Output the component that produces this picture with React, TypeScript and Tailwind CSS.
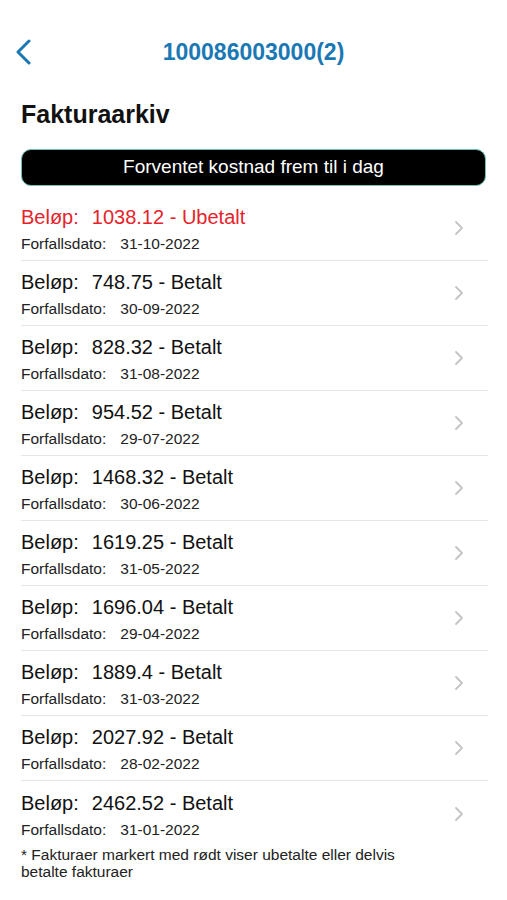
import React from "react";

const rows = [
  { amount: "1038.12", status: "Ubetalt", date: "31-10-2022", red: true },
  { amount: "748.75", status: "Betalt", date: "30-09-2022" },
  { amount: "828.32", status: "Betalt", date: "31-08-2022" },
  { amount: "954.52", status: "Betalt", date: "29-07-2022" },
  { amount: "1468.32", status: "Betalt", date: "30-06-2022" },
  { amount: "1619.25", status: "Betalt", date: "31-05-2022" },
  { amount: "1696.04", status: "Betalt", date: "29-04-2022" },
  { amount: "1889.4", status: "Betalt", date: "31-03-2022" },
  { amount: "2027.92", status: "Betalt", date: "28-02-2022" },
  { amount: "2462.52", status: "Betalt", date: "31-01-2022" },
];

export default function App() {
  return (
    <div
      className="w-[507px] min-h-[900px] bg-white text-[#111]"
      style={{ fontFamily: '"Liberation Sans", Arial, sans-serif' }}
    >
      <div className="grid grid-cols-[48px_1fr_48px] items-center pt-[28px] h-[76px]">
        <div className="flex items-center pl-[15px]">
          <svg width="18" height="26" viewBox="0 0 18 26" fill="none">
            <path d="M14 2 L3 13 L14 24" stroke="#1a78b4" strokeWidth="3" strokeLinecap="round" strokeLinejoin="round" />
          </svg>
        </div>
        <div className="text-center text-[23px] font-bold text-[#1a78b4] leading-[28px]">
          100086003000(2)
        </div>
        <div />
      </div>

      <div className="px-[21px]">
        <h1 className="mt-[23px] text-[25px] leading-[30px] font-bold">Fakturaarkiv</h1>

        <div className="mt-[20px] h-[37px] rounded-[10px] bg-black border border-[#6cc2b4] flex items-center justify-center text-white text-[19px]">
          Forventet kostnad frem til i dag
        </div>

        <div className="mt-[10px] w-[467px]">
          {rows.map((r, i) => (
            <div
              key={i}
              className={`flex items-center h-[65px] ${i < rows.length - 1 ? "border-b border-[#e6e6e6]" : ""}`}
            >
              <div className="flex-1 pt-[2px]">
                <div className={`text-[20px] leading-[26px] ${r.red ? "text-[#e6232b]" : "text-[#111]"}`}>
                  <span>Beløp:</span>
                  <span className="ml-[13px]">{r.amount}</span>
                  <span> - {r.status}</span>
                </div>
                <div className="mt-[4px] text-[15.5px] leading-[20px] text-[#222]">
                  <span>Forfallsdato:</span>
                  <span className="ml-[14px]">{r.date}</span>
                </div>
              </div>
              <div className="pr-[24px]">
                <svg width="10" height="16" viewBox="0 0 10 16" fill="none">
                  <path d="M2 2 L8 8 L2 14" stroke="#c4c4c4" strokeWidth="1.8" strokeLinecap="round" strokeLinejoin="round" />
                </svg>
              </div>
            </div>
          ))}
        </div>

        <p className="text-[15.5px] leading-[17px] text-[#222] w-[405px]">
          * Fakturaer markert med rødt viser ubetalte eller delvis betalte fakturaer
        </p>
      </div>
    </div>
  );
}
